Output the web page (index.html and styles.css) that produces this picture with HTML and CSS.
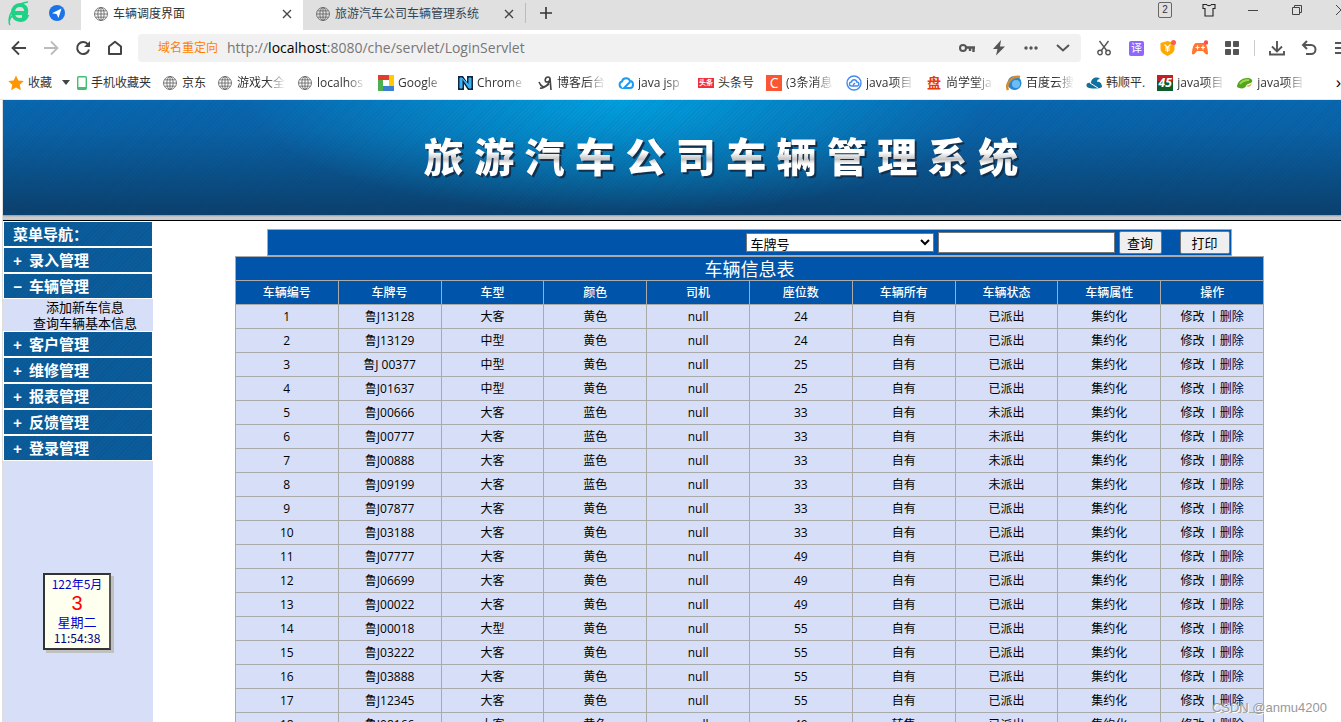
FILE: index.html
```html
<!DOCTYPE html>
<html lang="zh-CN">
<head>
  <meta charset="UTF-8">
  <meta name="viewport" content="width=device-width, initial-scale=1.0">
  <title>车辆调度界面</title>
  <link rel="stylesheet" href="styles.css">
</head>

<body>
<svg class="defs" width="0" height="0">
  <symbol id="globe" viewBox="0 0 16 16">
    <g fill="none" stroke="#666" stroke-width="1">
      <circle cx="8" cy="8" r="7.400"/>
      <ellipse cx="8" cy="8" rx="3.600" ry="7.400"/>
      <path d="M8 .6v14.800M.6 8h14.800M2 4.400h12M2 11.600h12"/>
    </g>
  </symbol>
</svg>

<!-- Browser window -->
<div class="tabstrip">
  <div class="pinned">
    <svg width="24" height="26" viewBox="0 0 24 26"><path d="M5 13h14c1-5-2-8-6-8s-7 3-7 7.500 3 7.500 7 7.500c3 0 5-1 6-3h-4" fill="none" stroke="#1fd186" stroke-width="4"/><path d="M2 21c0-9 8-18 19-19M3 25c-2-3 0-7 2-9" fill="none" stroke="#1fd186" stroke-width="1.500"/></svg>
    <svg width="16" height="16" viewBox="0 0 16 16"><circle cx="8" cy="8" r="8" fill="#1a73e8"/><path d="M3 8.200 12.500 3.500 9.500 13 7.500 9z" fill="#fff"/></svg>
  </div>
  <div class="tab active">
    <svg class="tab-icon"><use href="#globe"/></svg>
    <span>车辆调度界面</span>
    <button type="button" class="tab-close" aria-label="关闭"><svg width="10" height="10" viewBox="0 0 10 10"><path d="M1 1l8 8M9 1l-8 8" stroke="#444" stroke-width="1.300"/></svg></button>
  </div>
  <div class="tab">
    <svg class="tab-icon"><use href="#globe"/></svg>
    <span>旅游汽车公司车辆管理系统</span>
    <button type="button" class="tab-close" aria-label="关闭"><svg width="10" height="10" viewBox="0 0 10 10"><path d="M1 1l8 8M9 1l-8 8" stroke="#444" stroke-width="1.300"/></svg></button>
  </div>
  <button type="button" class="newtab" aria-label="新标签"><svg width="12" height="12" viewBox="0 0 12 12"><path d="M6 0v12M0 6h12" stroke="#333" stroke-width="1.600"/></svg></button>
  <div class="wincontrols">
    <button type="button" aria-label="标签数"><span class="count">2</span></button>
    <button type="button" aria-label="皮肤"><svg width="14" height="14" viewBox="0 0 14 14"><path d="M4.500 1.500c1 1.500 4 1.500 5 0h3.500v4h-2v7.500H3V5.500H1v-4z" fill="none" stroke="#222" stroke-width="1.100"/></svg></button>
    <button type="button" aria-label="最小化"><svg width="12" height="12" viewBox="0 0 12 12"><path d="M1 6.500h10" stroke="#444"/></svg></button>
    <button type="button" aria-label="还原"><svg width="12" height="12" viewBox="0 0 12 12"><path d="M1.500 3.500h7v7h-7zM3.500 3.500v-2h7v7h-2" fill="none" stroke="#444"/></svg></button>
    <button type="button" class="half" aria-label="关闭窗口"><svg width="12" height="12" viewBox="0 0 12 12"><path d="M1 1l10 10M11 1L1 11" stroke="#444"/></svg></button>
  </div>
</div>

<div class="toolbar">
  <button type="button" aria-label="后退"><svg width="16" height="16" viewBox="0 0 16 16"><path d="M15 8H2M8 1.500L1.500 8 8 14.500" fill="none" stroke="#444" stroke-width="1.800"/></svg></button>
  <button type="button" aria-label="前进"><svg width="16" height="16" viewBox="0 0 16 16"><path d="M1 8h13M8 1.500L14.500 8 8 14.500" fill="none" stroke="#bbb" stroke-width="1.800"/></svg></button>
  <button type="button" aria-label="刷新"><svg width="16" height="16" viewBox="0 0 16 16"><path d="M13 4.500A6 6 0 1 0 14 9.500" fill="none" stroke="#444" stroke-width="2"/><path d="M15 1v6H9z" fill="#444"/></svg></button>
  <button type="button" aria-label="主页"><svg width="16" height="16" viewBox="0 0 16 16"><path d="M2 6.500L8 1.800l6 4.700V14H2z" fill="none" stroke="#444" stroke-width="2" stroke-linejoin="round"/></svg></button>
  <div class="address">
    <span class="redirect">域名重定向</span>
    <span class="url">http://<b>localhost</b>:8080/che/servlet/LoginServlet</span>
    <button type="button" aria-label="密码"><svg width="16" height="12" viewBox="0 0 16 12"><circle cx="4" cy="6" r="3" fill="none" stroke="#555" stroke-width="2"/><path d="M7 5.500h9M14.500 5v5M11 5v4" stroke="#555" stroke-width="2.400"/></svg></button>
    <button type="button" aria-label="极速模式"><svg width="12" height="16" viewBox="0 0 12 16"><path d="M8 0L0 9h4.500L3 15.500 12 6.500H7z" fill="#555"/></svg></button>
    <button type="button" aria-label="更多"><svg width="14" height="4" viewBox="0 0 14 4"><g fill="#555"><circle cx="2" cy="2" r="1.700"/><circle cx="7" cy="2" r="1.700"/><circle cx="12" cy="2" r="1.700"/></g></svg></button>
    <button type="button" aria-label="展开"><svg width="14" height="8" viewBox="0 0 14 8"><path d="M1 1l6 5.500L13 1" fill="none" stroke="#555" stroke-width="2"/></svg></button>
  </div>
  <button type="button" aria-label="截图"><svg width="14" height="16" viewBox="0 0 14 16"><g fill="none" stroke="#555" stroke-width="1.400"><path d="M2.500 1l7.500 10M11.500 1L4 11"/><circle cx="3" cy="12.500" r="2.200"/><circle cx="11" cy="12.500" r="2.200"/></g></svg></button>
  <button type="button" aria-label="翻译"><span class="translate">译</span></button>
  <button type="button" aria-label="钱包"><svg width="16" height="16" viewBox="0 0 16 16"><path d="M7.500 1l7 2v6c0 3-3 5-7 7-4-2-7-4-7-7V3z" fill="#ffa800"/><path d="M4.500 4.500l3 3 3-3M7.500 7.500V12M5 8h5M5 10h5" fill="none" stroke="#fff" stroke-width="1.200"/><circle cx="13.500" cy="2.500" r="2.500" fill="#ff5a5a"/></svg></button>
  <button type="button" aria-label="游戏"><svg width="16" height="16" viewBox="0 0 16 16"><path d="M4 3h8c2 0 4 5 4 11-2 2-4-2-5-3H5c-1 1-3 5-5 3C0 8 2 3 4 3z" fill="#ff7733"/><path d="M3.500 7.500h4M5.500 5.500v4M9 7.500h4M11 5.500v4" stroke="#fff" stroke-width="1.200"/><circle cx="14" cy="2.500" r="2.200" fill="#ff4d4d"/></svg></button>
  <button type="button" aria-label="应用"><svg width="14" height="14" viewBox="0 0 14 14"><g fill="#555"><rect width="6" height="6" rx="1"/><rect x="8" width="6" height="6" rx="1"/><rect y="8" width="6" height="6" rx="1"/><rect x="8" y="8" width="6" height="6" rx="1"/></g></svg></button>
  <span class="divider"></span>
  <button type="button" aria-label="下载"><svg width="16" height="16" viewBox="0 0 16 16"><path d="M8 1v10M3 6.500l5 5 5-5M1 11v3.500h14V11" fill="none" stroke="#555" stroke-width="1.900"/></svg></button>
  <button type="button" aria-label="恢复"><svg width="16" height="16" viewBox="0 0 16 16"><path d="M2 5h8a4.500 4.500 0 0 1 0 9H5M6 1L2 5l4 4" fill="none" stroke="#555" stroke-width="2"/></svg></button>
  <button type="button" class="half" aria-label="菜单"><svg width="14" height="12" viewBox="0 0 14 12"><path d="M0 1h14M0 6h14M0 11h14" stroke="#555" stroke-width="2"/></svg></button>
</div>

<nav class="bookmarks">
  <a href="#" class="fav"><svg width="16" height="16" viewBox="0 0 16 16"><path d="M8 .5l2.300 5 5.500.6-4.100 3.700 1.200 5.500L8 12.500l-4.900 2.800 1.200-5.500L.2 6.100l5.500-.6z" fill="#ff9500"/></svg><span>收藏</span><i class="caret"></i></a>
  <a href="#"><svg width="10" height="14" viewBox="0 0 10 14"><rect x=".7" y=".7" width="8.600" height="12.600" rx="1" fill="#fff" stroke="#3fc073" stroke-width="1.400"/><path d="M1 11h8v2.500H1z" fill="#3fc073"/></svg><span>手机收藏夹</span></a>
  <a href="#"><svg class="tab-icon"><use href="#globe"/></svg><span>京东</span></a>
  <a href="#" class="cut"><svg class="tab-icon"><use href="#globe"/></svg><span>游戏大全</span></a>
  <a href="#" class="cut"><svg class="tab-icon"><use href="#globe"/></svg><span>localhos</span></a>
  <a href="#" class="cut"><svg width="16" height="16" viewBox="0 0 16 16"><path d="M0 0h11v5H0z" fill="#e33b2e"/><path d="M11 0h5v11h-5z" fill="#fc0"/><path d="M5 11h11v5H5z" fill="#3b7fd0"/><path d="M0 5h5v11H0z" fill="#4caf50"/></svg><span>Google</span></a>
  <a href="#" class="cut"><svg width="15" height="16" viewBox="0 0 15 16"><path d="M0 1h5l4 6V1h6v14h-5L6 9v6H0z" fill="#15243c"/><path d="M2 3h2l7 10h2V3h-2v7L4 3v10H2z" fill="#3bb2f4" stroke="#3bb2f4"/></svg><span>Chrome</span></a>
  <a href="#" class="cut"><svg width="15" height="16" viewBox="0 0 15 16"><path d="M1 7c2 5 5 6 8 3 4-4 4-8 1-8s-4 5-1 5 3-4 3-4l1 12M2 13c3 1 6-2 9-4" fill="none" stroke="#444" stroke-width="1.600"/></svg><span>博客后台</span></a>
  <a href="#" class="cut"><svg width="16" height="16" viewBox="0 0 16 16"><path d="M4 13a3.400 3.400 0 0 1 0-6.500A4.200 4.200 0 0 1 12 6c4 0 4 7 0 7H6l6-6" fill="none" stroke="#1a9bf5" stroke-width="2"/></svg><span>java jsp</span></a>
  <a href="#"><em class="badge red">头条</em><span>头条号</span></a>
  <a href="#" class="cut"><em class="badge csdn">C</em><span>(3条消息</span></a>
  <a href="#" class="cut"><svg width="16" height="16" viewBox="0 0 16 16"><g fill="none" stroke="#4489f0" stroke-width="1.400"><circle cx="8" cy="8" r="7"/><path d="M5.500 11a2 2 0 0 1 0-4 2.700 2.700 0 0 1 5.300 0 2 2 0 0 1 0 4zM7 10l2-2"/></g></svg><span>java项目</span></a>
  <a href="#" class="cut"><em class="badge pan">盘</em><span>尚学堂ja</span></a>
  <a href="#" class="cut"><svg width="16" height="16" viewBox="0 0 16 16"><circle cx="8.500" cy="8" r="7" fill="#2a86d1"/><circle cx="10" cy="9" r="4" fill="#6dbdf5"/><path d="M2 15C-1 9 6 0 14 2" fill="none" stroke="#d98c2b" stroke-width="2.500"/></svg><span>百度云搜</span></a>
  <a href="#"><svg width="16" height="16" viewBox="0 0 16 16"><path d="M1 12C-1 8 3 7 5 8c0-5 6-7 9-4-2 0-3 1-3 3 3-1 5 2 5 5-3 2-12 2-15 0z" fill="#12709e"/><path d="M4 8l8 5" stroke="#fff"/></svg><span>韩顺平.</span></a>
  <a href="#" class="cut"><em class="badge n45">45</em><span>java项目</span></a>
  <a href="#" class="cut"><svg width="16" height="16" viewBox="0 0 16 16"><path d="M0 12C0 6 6 3 10 3s6 2 5 4-5 1-6 4-6 3-9 1z" fill="#52a51c"/><path d="M3 9c2-3 6-4 9-4" stroke="#9bd84a" stroke-width="2" fill="none"/><path d="M9 11c2-1 4-1 6-3-1 3-3 5-6 3" fill="#e5a93c"/></svg><span>java项目</span></a>
  <button type="button" class="more" aria-label="更多书签">›</button>
</nav>

<!-- Web page -->
<div class="page">
  <header class="banner">
    <h1>旅 游 汽 车 公 司 车 辆 管 理 系 统</h1>
  </header>
  <div class="content">
    <aside class="sidebar">
      <ul class="menu">
        <li class="head">菜单导航：</li>
        <li><a href="#"><i>+</i>录入管理</a></li>
        <li><a href="#"><i>−</i>车辆管理</a></li>
        <li class="submenu">
          <a href="#">添加新车信息</a>
          <a href="#">查询车辆基本信息</a>
        </li>
        <li><a href="#"><i>+</i>客户管理</a></li>
        <li><a href="#"><i>+</i>维修管理</a></li>
        <li><a href="#"><i>+</i>报表管理</a></li>
        <li><a href="#"><i>+</i>反馈管理</a></li>
        <li><a href="#"><i>+</i>登录管理</a></li>
      </ul>
      <div class="calendar">
        <div class="month">122年5月</div>
        <div class="day">3</div>
        <div class="week">星期二</div>
        <div class="time">11:54:38</div>
      </div>
    </aside>

    <main>
      <form class="search">
        <select name="type" aria-label="查询条件">
          <option>车牌号</option>
        </select>
        <input type="text" name="key" aria-label="关键字">
        <button type="button">查询</button>
        <button type="button" class="print">打印</button>
      </form>
      <table class="cars">
        <thead>
          <tr><th colspan="10" class="title">车辆信息表</th></tr>
          <tr>
            <th>车辆编号</th>
            <th>车牌号</th>
            <th>车型</th>
            <th>颜色</th>
            <th>司机</th>
            <th>座位数</th>
            <th>车辆所有</th>
            <th>车辆状态</th>
            <th>车辆属性</th>
            <th>操作</th>
          </tr>
        </thead>
        <tbody id="rows"></tbody>
      </table>
    </main>
  </div>
</div>
<div class="watermark">CSDN @anmu4200</div>

<script src="cars.js"></script>
</body>
</html>
```
FILE: styles.css
```css
* {
  box-sizing: border-box;
}

body {
  margin: 0;
  height: 100vh;
  display: flex;
  flex-direction: column;
  overflow: hidden;
  background: #fff;
  font-family: "Open Sans", "Noto Sans CJK SC", sans-serif;
  font-size: 12px;
  line-height: 16px;
  color: #333;
}

a {
  color: inherit;
  text-decoration: none;
}

i, em {
  font-style: normal;
}

svg {
  display: block;
  flex: none;
}

.defs {
  position: absolute;
}

/* browser window */
.tabstrip {
  flex: none;
  display: flex;
  height: 30px;
  background: #e0e0e0;
}

.tabstrip button,
.toolbar button {
  display: flex;
  flex: none;
  align-items: center;
  justify-content: center;
  padding: 0;
  border: none;
  background: none;
}

.pinned {
  display: flex;
  align-items: center;
  gap: 18px;
  width: 81px;
  padding: 0 0 4px 7px;
}

.tab {
  display: flex;
  align-items: center;
  width: 222px;
  padding: 0 11px 2px 13px;
  color: #345;
}

.tab.active {
  background: #fff;
  color: #333;
}

.tab-icon {
  width: 14px;
  height: 14px;
  margin-right: 5px;
}

.tab-close {
  margin-left: auto;
}

.tabstrip .newtab {
  width: 40px;
  height: 20px;
  margin-top: 3px;
  border-left: 1px solid #bbb;
}

.wincontrols {
  display: flex;
  height: 20px;
  margin-left: auto;
}

.wincontrols button {
  width: 44px;
}

.wincontrols .half {
  width: 22px;
  overflow: hidden;
  justify-content: flex-start;
  padding-left: 16px;
}

.count {
  width: 14px;
  height: 16px;
  border: 1px solid #666;
  border-radius: 2px;
  font-size: 10px;
  line-height: 14px;
  color: #333;
}

.toolbar {
  flex: none;
  display: flex;
  align-items: center;
  height: 36px;
  padding-left: 3px;
}

.toolbar button {
  width: 32px;
  height: 28px;
}

.toolbar .half {
  width: 16px;
  overflow: hidden;
  justify-content: flex-start;
  padding-left: 10px;
}

.address {
  flex: 1;
  min-width: 0;
  display: flex;
  align-items: center;
  height: 28px;
  margin: 0 7px;
  padding: 0 2px 0 20px;
  border-radius: 4px;
  background: #f1f1f1;
}

.redirect {
  margin-right: 9px;
  color: #ff7f00;
}

.url {
  flex: 1;
  font-size: 14px;
  color: #777;
}

.url b {
  font-weight: normal;
  color: #000;
}

.translate {
  width: 15px;
  height: 15px;
  border-radius: 2px;
  background: #8f66ff;
  color: #fff;
  font-size: 11px;
  line-height: 15px;
}

.divider {
  width: 1px;
  height: 16px;
  margin: 0 6px;
  background: #ccc;
}

.bookmarks {
  flex: none;
  display: flex;
  align-items: center;
  gap: 12px;
  height: 34px;
  padding-left: 8px;
  border-bottom: 1px solid #e8e8e8;
  overflow: hidden;
}

.bookmarks a {
  display: flex;
  flex: none;
  align-items: center;
  gap: 4px;
  white-space: nowrap;
}

.bookmarks .tab-icon {
  margin-right: 1px;
}

.bookmarks .fav {
  margin-right: -5px;
}

.bookmarks .cut {
  width: 68px;
  overflow: hidden;
}

.bookmarks .cut span {
  flex: 1;
  -webkit-mask-image: linear-gradient(to right, #000 60%, transparent);
  mask-image: linear-gradient(to right, #000 60%, transparent);
}

.caret {
  margin-left: 6px;
  border: 4px solid transparent;
  border-top: 5px solid #444;
  border-bottom: none;
}

.badge {
  width: 16px;
  height: 16px;
  flex: none;
  text-align: center;
  color: #fff;
  line-height: 16px;
}

.badge.red {
  height: 10px;
  background: #f2303c;
  font-size: 7px;
  font-weight: bold;
  line-height: 10px;
}

.badge.csdn {
  background: #fc5531;
  font-size: 14px;
}

.badge.pan {
  color: #e8380d;
  font-size: 14px;
  font-weight: bold;
}

.badge.n45 {
  background: linear-gradient(#c02020 35%, #0e5c2c 35%);
  font-size: 12px;
  font-weight: bold;
  font-style: italic;
}

.bookmarks .more {
  margin-left: auto;
  padding: 0;
  border: none;
  background: none;
  font-size: 16px;
}

/* web page */
.page {
  flex: 1;
  min-height: 0;
  display: flex;
  flex-direction: column;
  margin-left: 2px;
  border-left: 1px solid #ddd;
  overflow: hidden;
}

.banner {
  flex: none;
  height: 121px;
  padding: 28px 0 0 98px;
  border-bottom: 1px solid #000;
  background:
    linear-gradient(#8a9aa8, #ccc 2px) bottom / 100% 5px no-repeat,
    repeating-linear-gradient(-45deg, transparent 0 2px, rgba(0, 30, 80, 0.06) 2px 3px),
    radial-gradient(ellipse 370px 115px at 46% 0, rgba(0, 170, 230, 0.85), transparent),
    linear-gradient(#0868b0, #0a62a6 30px, #0b4270 110px);
}

.banner h1 {
  margin: 0;
  text-align: center;
  white-space: nowrap;
  font-size: 40px;
  font-weight: 900;
  line-height: 58px;
  color: transparent;
  background: linear-gradient(#fff 42%, #c4c4c4 54%, #fff 62%);
  -webkit-background-clip: text;
  background-clip: text;
  filter: drop-shadow(2px 2px 0 #12304d);
}

.content {
  flex: 1;
  min-height: 0;
  display: flex;
}

.sidebar {
  flex: none;
  width: 150px;
  background: #d6dff7;
}

.menu {
  margin: 0;
  padding: 0;
  list-style: none;
  font-size: 15px;
  font-weight: bold;
  color: #fff;
}

.menu li {
  height: 26px;
  padding-left: 9px;
  border: 1px solid #fff;
  line-height: 24px;
  background: repeating-linear-gradient(-45deg, #0b5c9b 0 2px, #0a5794 2px 3px);
}

.menu i {
  display: inline-block;
  width: 16px;
  font-family: "Liberation Mono", monospace;
}

.menu .submenu {
  height: auto;
  padding-left: 14px;
  border: none;
  background: #d6dff7;
  color: #000;
  font-size: 13px;
  font-weight: normal;
  line-height: 16px;
  text-align: center;
}

.submenu a {
  display: block;
}

.calendar {
  width: 68px;
  height: 77px;
  margin: 112px auto 0 40px;
  padding-top: 1px;
  border: 2px solid #333;
  border-right-color: #555;
  background: #ffffef;
  box-shadow: 3px 3px 0 #c0c0c0;
  text-align: center;
  font-family: "Noto Sans CJK SC", sans-serif;
  color: #0000d0;
}

.calendar .day {
  font-family: "Liberation Sans", sans-serif;
  font-size: 20px;
  line-height: 22px;
  color: #f00;
}

.calendar .week {
  font-size: 13px;
}

.calendar .time {
  color: #000080;
}

main {
  flex: 1;
  margin-left: 5px;
  padding-top: 8px;
  overflow: hidden;
  color: #000;
}

.search {
  display: flex;
  align-items: center;
  justify-content: flex-end;
  gap: 4px;
  width: calc(87% - 65px);
  height: 27px;
  margin: 0 auto;
  padding-right: 1px;
  border: 1px solid #aaa;
  background: #0054a9;
}

.search select,
.search input,
.search button {
  padding: 0;
  border: 1px solid #767676;
  font-family: inherit;
  font-size: 13px;
}

.search select {
  width: 188px;
  height: 19px;
  background: #fff;
  line-height: 16px;
}

.search input {
  width: 177px;
  height: 21px;
}

.search button {
  width: 43px;
  height: 23px;
  border-radius: 2px;
  background: #efefef;
}

.search .print {
  width: 50px;
  margin-left: 14px;
}

.cars {
  width: 87%;
  margin: 0 auto;
  border-collapse: collapse;
  table-layout: fixed;
  text-align: center;
}

.cars th,
.cars td {
  height: 24px;
  padding: 0;
  border: 1px solid #aaa;
  background: #d6dff7;
  font-weight: normal;
}

.cars th {
  background: #0054a9;
  color: #fff;
  font-weight: 500;
}

.cars .title {
  font-size: 18px;
  font-weight: normal;
}

.cars .del {
  color: #00003c;
}

.watermark {
  position: absolute;
  right: 14px;
  bottom: 6px;
  font-family: "Liberation Sans", sans-serif;
  font-size: 13px;
  color: #999;
  text-shadow: 1px 1px 0 #fff;
}
```
FILE: cars.js
```js
// [plate, model, color, seats, owner, status]
var cars = [
  ["鲁J13128", "大客", "黄色", 24, "自有", "已派出"],
  ["鲁J13129", "中型", "黄色", 24, "自有", "已派出"],
  ["鲁J 00377", "中型", "黄色", 25, "自有", "已派出"],
  ["鲁J01637", "中型", "黄色", 25, "自有", "已派出"],
  ["鲁J00666", "大客", "蓝色", 33, "自有", "未派出"],
  ["鲁J00777", "大客", "蓝色", 33, "自有", "未派出"],
  ["鲁J00888", "大客", "蓝色", 33, "自有", "未派出"],
  ["鲁J09199", "大客", "蓝色", 33, "自有", "未派出"],
  ["鲁J07877", "大客", "黄色", 33, "自有", "已派出"],
  ["鲁J03188", "大客", "黄色", 33, "自有", "已派出"],
  ["鲁J07777", "大客", "黄色", 49, "自有", "已派出"],
  ["鲁J06699", "大客", "黄色", 49, "自有", "已派出"],
  ["鲁J00022", "大客", "黄色", 49, "自有", "已派出"],
  ["鲁J00018", "大型", "黄色", 55, "自有", "已派出"],
  ["鲁J03222", "大客", "黄色", 55, "自有", "已派出"],
  ["鲁J03888", "大客", "黄色", 55, "自有", "已派出"],
  ["鲁J12345", "大客", "黄色", 55, "自有", "已派出"],
  ["鲁J08166", "大客", "黄色", 49, "转售", "已派出"]
];

var html = "";
for (var i = 0; i < cars.length; i++) {
  var c = cars[i];
  var cells = [i + 1, c[0], c[1], c[2], "null", c[3], c[4], c[5], "集约化",
    '<a href="#">修改</a> 丨<a href="#" class="del">删除</a>'];
  html += "<tr><td>" + cells.join("</td><td>") + "</td></tr>";
}
document.getElementById("rows").innerHTML = html;
```
